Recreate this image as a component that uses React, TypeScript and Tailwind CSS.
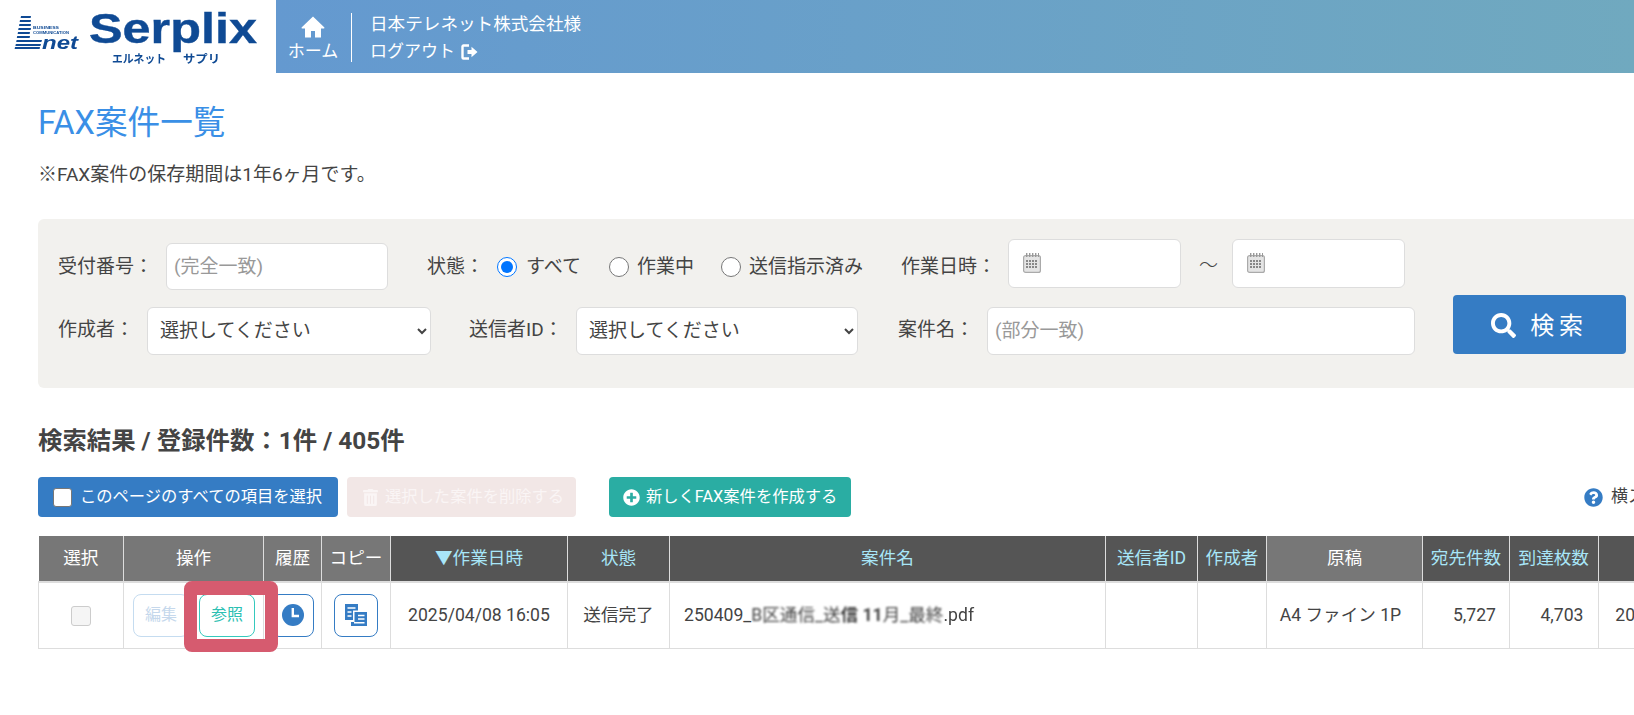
import React from "react";
import { FaSearch, FaTrashAlt, FaPlusCircle, FaQuestionCircle } from "react-icons/fa";

const Logo = () => (
  <svg width="276" height="73" viewBox="0 0 276 73" className="shrink-0 blur-[0.3px]">
    <g fill="#0f4a94">
      <polygon points="21,16 31,16 30.6,18 20.6,18" />
      <polygon points="20,20 31,20 30.6,22 19.6,22" />
      <polygon points="19.4,24 31,24 30.6,26 19,26" />
      <polygon points="18.6,28 31,28 30.6,30 18.2,30" />
      <polygon points="18,32 30,32 29.6,34 17.6,34" />
      <polygon points="17.2,36 30,36 29.6,38 16.8,38" />
      <polygon points="16.6,40 42,40 41.4,42 16.2,42" />
      <polygon points="15.8,44 41,44 40.4,46 15.4,46" />
      <polygon points="15,47 40,47 39.6,49 14.6,49" />
      <text x="33" y="29" fontSize="4" fontWeight="700" fontFamily="Liberation Sans" textLength="26" lengthAdjust="spacingAndGlyphs">BUSINESS</text>
      <text x="33" y="34" fontSize="4" fontWeight="700" fontFamily="Liberation Sans" textLength="36" lengthAdjust="spacingAndGlyphs">COMMUNICATION</text>
      <text x="42" y="49" fontSize="19" fontWeight="700" fontStyle="italic" fontFamily="Liberation Sans" textLength="36" lengthAdjust="spacingAndGlyphs">net</text>
      <text x="89" y="43" fontSize="42" fontWeight="700" fontFamily="Liberation Sans" stroke="#0f4a94" strokeWidth="0.4" textLength="168" lengthAdjust="spacingAndGlyphs">Serplix</text>
      <text x="112" y="63" fontSize="11.5" fontWeight="700" fontFamily="Noto Sans CJK JP" textLength="54" lengthAdjust="spacingAndGlyphs">エルネット</text>
      <text x="183" y="63" fontSize="11.5" fontWeight="700" fontFamily="Noto Sans CJK JP" textLength="37" lengthAdjust="spacingAndGlyphs">サプリ</text>
    </g>
  </svg>
);

const HomeIcon = () => (
  <svg width="24" height="22" viewBox="0 0 24 22" className="mt-[16px]" fill="#fff">
    <path d="M12 .5.8 11.2c-.6.6-.2 1.3.6 1.3H4V21.5h6v-6.5h4v6.5h6V12.5h2.6c.8 0 1.2-.7.6-1.3z" />
  </svg>
);

const LogoutIcon = () => (
  <svg width="17" height="16" viewBox="0 0 17 16" fill="none">
    <path d="M8 1.5H2.5a1 1 0 0 0-1 1v11a1 1 0 0 0 1 1H8" stroke="#fff" strokeWidth="2.4" />
    <path d="M6.5 6h4V2.8L16.5 8l-6 5.2V10h-4z" fill="#fff" />
  </svg>
);

const CalendarIcon = () => (
  <svg width="18" height="20" viewBox="0 0 18 20" className="absolute left-[14px] top-[13px]">
    <rect x="0.6" y="2.6" width="16.8" height="16.8" rx="2" fill="#e4e4e4" stroke="#aaa" strokeWidth="1.2" />
    <g fill="#999">
      <rect x="3" y="0" width="1.4" height="4" />
      <rect x="6" y="0" width="1.4" height="4" />
      <rect x="9" y="0" width="1.4" height="4" />
      <rect x="12" y="0" width="1.4" height="4" />
      <rect x="15" y="0" width="1" height="4" />
    </g>
    <g fill="#888">
      {[7, 10, 13].map((y) =>
        [3, 6, 9, 12].map((x) => <rect key={`${x}-${y}`} x={x} y={y} width="2" height="2" />)
      )}
    </g>
  </svg>
);

const ClockIcon = () => (
  <svg width="22" height="22" viewBox="0 0 22 22">
    <circle cx="11" cy="11" r="11" fill="#357cc4" />
    <path d="M10.8 4V12H17" stroke="#fff" strokeWidth="2.4" fill="none" />
  </svg>
);

const CopyIcon = () => (
  <svg width="22" height="22" viewBox="0 0 22 22">
    <path d="M0 0H13V6.5H8V16H0Z" fill="#357cc4" />
    <path d="M2.5 4H10.5M2.5 8H6.5M2.5 12H6.5" stroke="#fff" strokeWidth="1.4" />
    <path d="M9.5 8H22V22H6V18H9.5Z" fill="#357cc4" />
    <path d="M13 11.5H19.5M13 15H19.5M9 18.8H19.5" stroke="#fff" strokeWidth="1.4" />
  </svg>
);

const thDark = "border-l border-[#ddd] bg-[#555555] px-0 text-center font-normal text-[#a8e6f8]";
const thGray = "border-l border-[#ddd] bg-[#777777] px-0 text-center font-normal text-white";
const td = "border-l border-[#ddd] p-0 text-center";

export default function App() {
  return (
    <div
      className="h-[715px] w-[1634px] overflow-hidden bg-white text-[17.6px] text-[#444444]"
      style={{ fontFamily: 'Roboto, "Noto Sans CJK JP", sans-serif' }}
    >
      <header className="flex h-[73px] w-full">
        <Logo />
        <div className="flex flex-1 bg-linear-to-r from-[#6499d0] to-[#70a9bf] text-white">
          <a className="ml-[12px] flex w-[50px] flex-col items-center">
            <HomeIcon />
            <span className="mt-[1px] whitespace-nowrap text-[17px] leading-[24px]">ホーム</span>
          </a>
          <div className="ml-[13px] mt-[13px] h-[49px] w-px bg-white" />
          <div className="ml-[18px] flex flex-col">
            <span className="mt-[11px] text-[17.6px] leading-[27px]">日本テレネット株式会社様</span>
            <span className="flex items-center gap-[6px] text-[17px] leading-[27px]">
              ログアウト <LogoutIcon />
            </span>
          </div>
        </div>
      </header>

      <main className="pl-[38px]">
        <h1 className="pt-[27px] text-[32.6px] leading-[46px] text-[#3a8fe6]">FAX案件一覧</h1>
        <p className="mt-[16px] text-[19px] leading-[26px]">※FAX案件の保存期間は1年6ヶ月です。</p>

        <section className="mt-[31px] h-[169px] w-[1640px] rounded-md bg-[#f2f1ee] pl-[20px] pt-[20px] text-[19px]">
          <div className="flex h-[51px] items-start whitespace-nowrap">
            <span className="mt-[15px] w-[108px] leading-[26px]">受付番号：</span>
            <input
              readOnly
              placeholder="(完全一致)"
              className="mt-[4px] h-[47px] w-[222px] rounded-md border border-[#dddddd] bg-white pl-[7px] text-[19px] placeholder:text-[#999999]"
            />
            <span className="ml-[39px] mt-[15px] w-[70px] leading-[26px]">状態：</span>
            <input type="radio" name="st" defaultChecked className="mt-[18px] h-[20px] w-[20px]" />
            <span className="ml-[9px] mt-[15px] w-[83px] leading-[26px]">すべて</span>
            <input type="radio" name="st" className="mt-[18px] h-[20px] w-[20px]" />
            <span className="ml-[8px] mt-[15px] w-[84px] leading-[26px]">作業中</span>
            <input type="radio" name="st" className="mt-[18px] h-[20px] w-[20px]" />
            <span className="ml-[8px] mt-[15px] w-[152px] leading-[26px]">送信指示済み</span>
            <span className="mt-[15px] w-[107px] leading-[26px]">作業日時：</span>
            <div className="relative h-[49px] w-[173px] rounded-md border border-[#dddddd] bg-white">
              <CalendarIcon />
            </div>
            <span className="ml-[18px] mt-[14px] w-[33px] font-light leading-[26px]">～</span>
            <div className="relative h-[49px] w-[173px] rounded-md border border-[#dddddd] bg-white">
              <CalendarIcon />
            </div>
          </div>

          <div className="mt-[17px] flex h-[47px] items-center whitespace-nowrap">
            <span className="w-[89px]">作成者：</span>
            <select className="h-[48px] w-[284px] rounded-md border border-[#dddddd] bg-white pl-[8px] text-[19px] text-[#444444]">
              <option>選択してください</option>
            </select>
            <span className="ml-[38px] w-[107px]">送信者ID：</span>
            <select className="h-[48px] w-[282px] rounded-md border border-[#dddddd] bg-white pl-[8px] text-[19px] text-[#444444]">
              <option>選択してください</option>
            </select>
            <span className="ml-[40px] w-[89px]">案件名：</span>
            <input
              readOnly
              placeholder="(部分一致)"
              className="h-[48px] w-[427.5px] rounded-md border border-[#dddddd] bg-white pl-[7px] text-[19px] placeholder:text-[#999999]"
            />
            <button className="ml-[38.5px] flex h-[59px] w-[173px] shrink-0 items-center justify-center self-end rounded-[4px] bg-[#357cc4] pt-[2px] text-[24px] tracking-[0.2em] text-white">
              <FaSearch className="mr-[14px] text-[25px]" />
              検索
            </button>
          </div>
        </section>

        <h2 className="mt-[38px] text-[24.4px] font-bold leading-[30px] text-[#444444]">
          検索結果 / 登録件数：1件 / 405件
        </h2>

        <div className="mt-[21px] flex h-[40px] items-stretch whitespace-nowrap text-[16.3px] text-white">
          <button className="flex w-[300px] shrink-0 items-center rounded-[4px] bg-[#357cc4] pl-[15px]">
            <span className="h-[19px] w-[19px] shrink-0 rounded-[3px] border border-[#777777] bg-white" />
            <span className="ml-[8px]">このページのすべての項目を選択</span>
          </button>
          <button className="ml-[9px] flex w-[229px] shrink-0 items-center rounded-[4px] bg-[#f2e7e6] pl-[15px] text-[#faf5f5]">
            <FaTrashAlt className="text-[17px]" />
            <span className="ml-[6px]">選択した案件を削除する</span>
          </button>
          <button className="ml-[33px] flex w-[242px] shrink-0 items-center rounded-[4px] bg-[#2aada3] pl-[14px]">
            <FaPlusCircle className="text-[17px]" />
            <span className="ml-[6px]">新しくFAX案件を作成する</span>
          </button>
          <span className="ml-[733px] flex shrink-0 items-center text-[17px] text-[#444444]">
            <FaQuestionCircle className="text-[19px] text-[#357cc4]" />
            <span className="ml-[8px]">横スクロールできます</span>
          </span>
        </div>

        <table className="mt-[19px] w-[1735.5px] table-fixed border-collapse whitespace-nowrap">
          <colgroup>
            <col className="w-[85px]" />
            <col className="w-[140px]" />
            <col className="w-[58px]" />
            <col className="w-[69px]" />
            <col className="w-[177px]" />
            <col className="w-[102px]" />
            <col className="w-[436px]" />
            <col className="w-[92px]" />
            <col className="w-[69px]" />
            <col className="w-[156px]" />
            <col className="w-[87px]" />
            <col className="w-[88.5px]" />
            <col className="w-[176px]" />
          </colgroup>
          <thead>
            <tr className="h-[46px] border-b-2 border-[#dddddd]">
              <th className={thGray + " border-l-0"}>選択</th>
              <th className={thGray}>操作</th>
              <th className={thGray}>履歴</th>
              <th className={thGray}>コピー</th>
              <th className={thDark}>▼作業日時</th>
              <th className={thDark}>状態</th>
              <th className={thDark}>案件名</th>
              <th className={thDark}>送信者ID</th>
              <th className={thDark}>作成者</th>
              <th className={thGray}>原稿</th>
              <th className={thDark}>宛先件数</th>
              <th className={thDark}>到達枚数</th>
              <th className={thDark}></th>
            </tr>
          </thead>
          <tbody>
            <tr className="h-[66px] border-b border-l border-[#dddddd]">
              <td className="p-0 text-center">
                <span className="inline-block h-[20px] w-[20px] rounded-[3px] border border-[#cccccc] bg-[#f5f5f5] align-middle" />
              </td>
              <td className={td + " relative"}>
                <div className="flex items-center justify-center gap-[10px] pl-[1px]">
                  <span className="flex h-[43px] w-[56px] items-center justify-center rounded-lg border border-[#c5dcf0] text-[16px] text-[#c5d8ec]">
                    編集
                  </span>
                  <span className="flex h-[43px] w-[56px] items-center justify-center rounded-lg border border-[#35c9bd] text-[16px] text-[#2cc0b2]">
                    参照
                  </span>
                </div>
                <div className="absolute left-[59.5px] top-[-2px] z-10 h-[71px] w-[94.5px] rounded-lg border-x-[13px] border-b-[13px] border-t-[14px] border-[#d65b6f]" />
              </td>
              <td className={td}>
                <span className="mx-auto flex h-[43px] w-[43px] items-center justify-center rounded-lg border border-[#357cc4]">
                  <ClockIcon />
                </span>
              </td>
              <td className={td}>
                <span className="mx-auto flex h-[43px] w-[44px] items-center justify-center rounded-lg border border-[#357cc4]">
                  <CopyIcon />
                </span>
              </td>
              <td className={td}>2025/04/08 16:05</td>
              <td className={td}>送信完了</td>
              <td className={td + " pl-[14px] text-left"}>
                250409_
                <span className="blur-[0.8px]">B区通信_送</span>
                <span className="font-bold blur-[1px]">信 11</span>
                <span className="blur-[0.8px]">月_最終</span>
                <span className="blur-[0.4px]">.pdf</span>
              </td>
              <td className={td}></td>
              <td className={td}></td>
              <td className={td + " pr-[8px]"}>A4 ファイン 1P</td>
              <td className={td + " pr-[13px] text-right"}>5,727</td>
              <td className={td + " pr-[14px] text-right"}>4,703</td>
              <td className={td}>2025/04/08 16:05</td>
            </tr>
          </tbody>
        </table>
      </main>
    </div>
  );
}
